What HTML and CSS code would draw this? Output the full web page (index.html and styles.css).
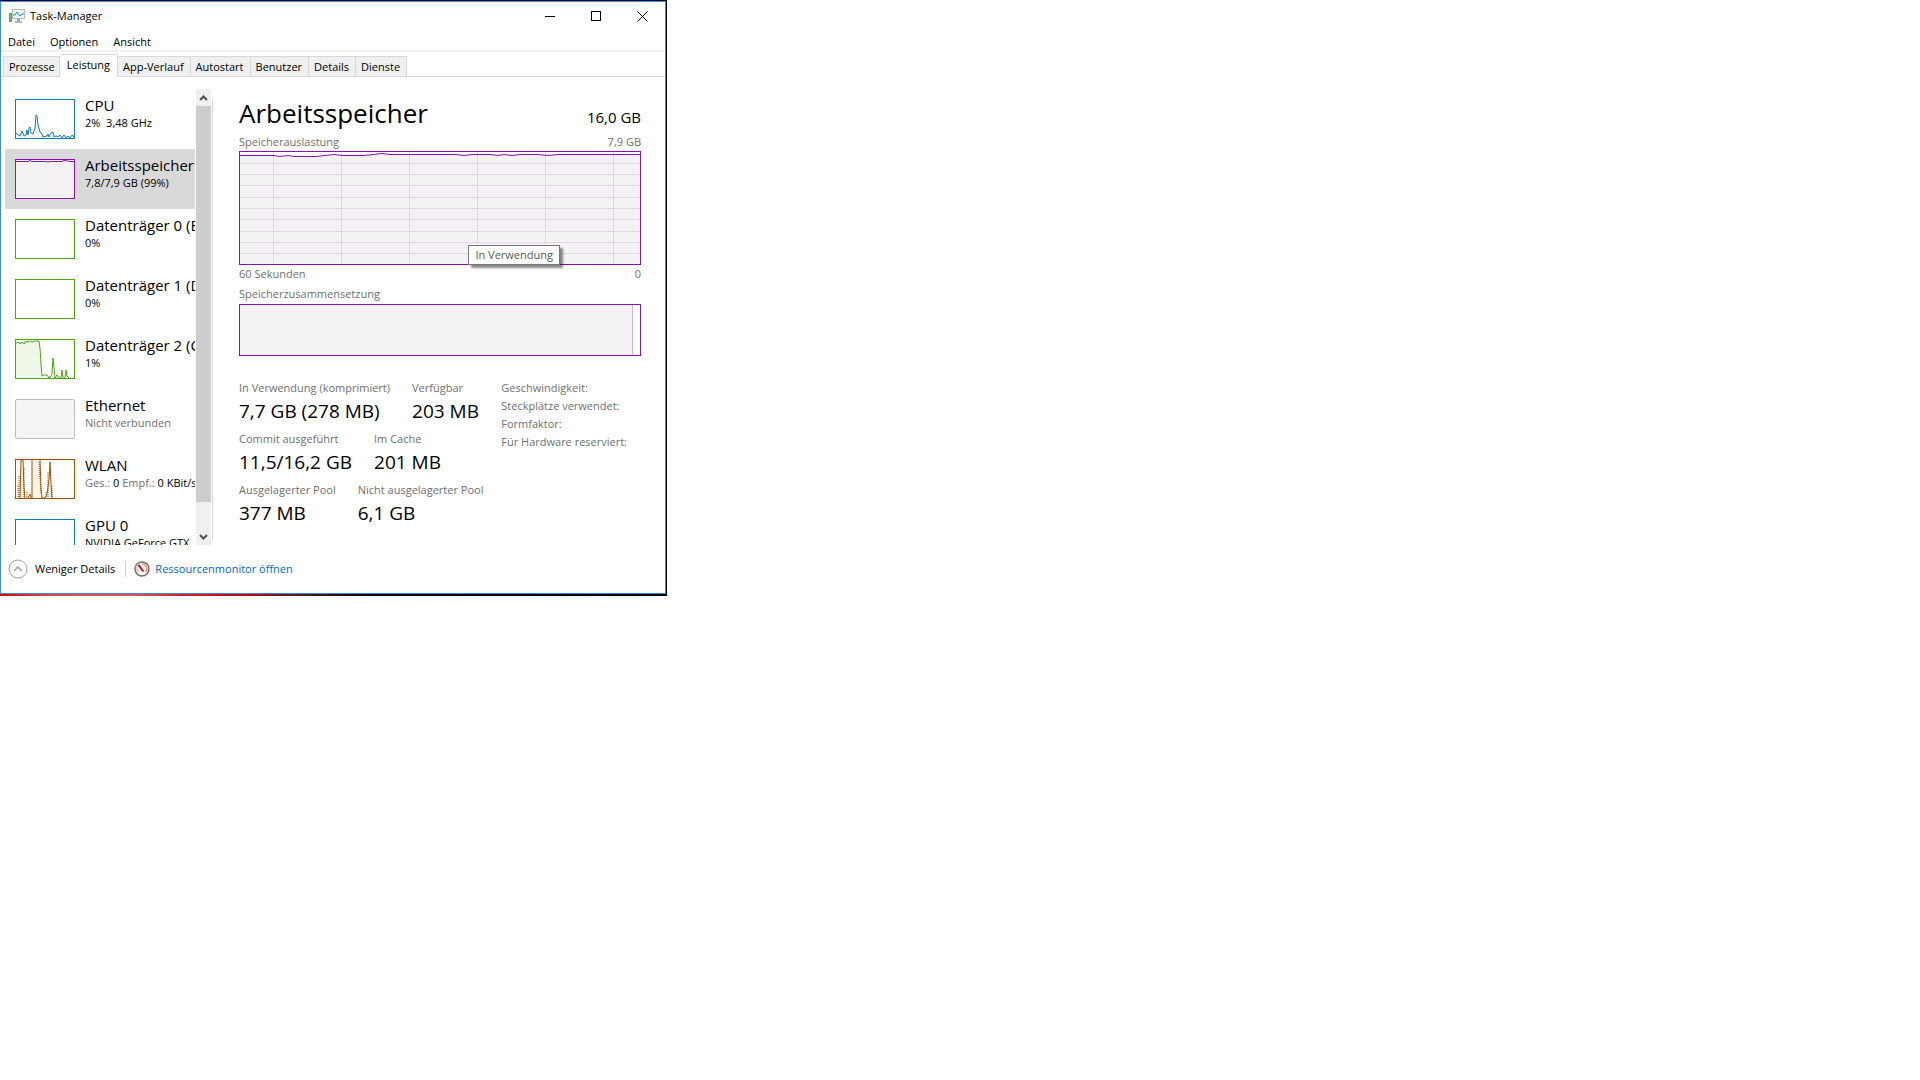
FILE: index.html
```html
<!DOCTYPE html>
<html lang="de">
<head>
  <meta charset="UTF-8">
  <title>Task-Manager</title>
  <meta name="viewport" content="width=device-width, initial-scale=1">
  <link rel="stylesheet" href="styles.css">
</head>
<body>

  <div class="desktop">
    <div class="window">

      <header class="titlebar">
        <svg class="app-icon" width="16" height="14" viewBox="0 0 16 14">
          <rect x="0" y="4" width="3" height="9" fill="#8e9194"/>
          <rect x="1" y="5" width="1" height="3" fill="#3fd23f"/>
          <rect x="3" y="0" width="13" height="10" fill="#b4b7ba"/>
          <rect x="4" y="1" width="11" height="8" fill="#e2f3fc"/>
          <path d="M4 6 L6 6 L8 3 L11 7 L13 5 L15 5" fill="none" stroke="#2f8fc7"/>
          <rect x="8" y="10" width="3" height="2" fill="#9b9ea1"/>
          <rect x="6" y="12" width="7" height="2" fill="#b4b7ba"/>
        </svg>
        <h1>Task-Manager</h1>
        <div class="window-buttons">
          <button aria-label="Minimieren"><svg width="11" height="11"><path d="M0 5.5H10"/></svg></button>
          <button aria-label="Maximieren"><svg width="11" height="11"><path d="M.5 .5H9.5V9.5H.5Z"/></svg></button>
          <button aria-label="Schließen"><svg class="smooth" width="11" height="11"><path d="M.5 .5L10.5 10.5M10.5 .5L.5 10.5"/></svg></button>
        </div>
      </header>

      <nav class="menu">
        <button>Datei</button>
        <button>Optionen</button>
        <button>Ansicht</button>
      </nav>

      <div class="tabs" role="tablist">
        <button role="tab">Prozesse</button>
        <button role="tab" class="active" aria-selected="true">Leistung</button>
        <button role="tab">App-Verlauf</button>
        <button role="tab">Autostart</button>
        <button role="tab">Benutzer</button>
        <button role="tab">Details</button>
        <button role="tab">Dienste</button>
      </div>

      <main class="content">
        <aside class="sidebar">
          <div class="devices">
            <button class="device cpu">
              <svg class="thumb" viewBox="0 0 58 38">
                <path class="area" d="M0 34L2 35L4 36L6 31L8 36L10 34L12 31L13 35L14 28L15 29L16 35L18 31L19 33L20 16L21 15L22 25L24 31L26 35L28 37L31 36L33 35L34 37L36 32L37 35L39 34L41 38L42 36L44 38L46 34L48 38L50 34L52 37L54 38L56 35L58 37V38H0Z"/>
                <path d="M0 33L2 35L4 36L6 31L8 36L10 35L11 30L12 35L13 28L14 27L15 33L17 34L18 31L19 29L20 15L21 16L22 25L24 32L26 34L27 37L31 36L32 34L33 37L35 33L37 32L38 37L40 36L42 37L44 35L46 38L48 35L50 38L52 36L54 38L56 35L58 37"/>
              </svg>
              <span class="device-text"><b>CPU</b><small>2%&nbsp; 3,48 GHz</small></span>
            </button>
            <button class="device memory selected">
              <svg class="thumb" viewBox="0 0 58 38">
                <path class="area" d="M0 1H58V38H0Z"/>
                <path d="M0 1.5H12L14 .5L16 1.5H30L32 2L34 1.5H46L48 .5L52 1L54 1.5H58"/>
              </svg>
              <span class="device-text"><b>Arbeitsspeicher</b><small>7,8/7,9 GB (99%)</small></span>
            </button>
            <button class="device disk">
              <svg class="thumb" viewBox="0 0 58 38"></svg>
              <span class="device-text"><b>Datenträger 0 (E:)</b><small>0%</small></span>
            </button>
            <button class="device disk">
              <svg class="thumb" viewBox="0 0 58 38"></svg>
              <span class="device-text"><b>Datenträger 1 (D:)</b><small>0%</small></span>
            </button>
            <button class="device disk">
              <svg class="thumb" viewBox="0 0 58 38">
                <path class="area" d="M0 3L3 2L6 4L10 1L14 2L23 1L24 8L25 24L26 38H0Z"/>
                <path d="M0 3L2 2L4 4L6 2L8 4L10 1L12 2L14 1L16 2L19 1H23L24 8L25 24L26 36L28 35H31L33 38L35 36L36 34L37 18L38 28L39 38L41 35L43 38H45L46 30L47 38H49L50 30L51 36L53 38"/>
              </svg>
              <span class="device-text"><b>Datenträger 2 (C:)</b><small>1%</small></span>
            </button>
            <button class="device ethernet">
              <svg class="thumb" viewBox="0 0 58 38"></svg>
              <span class="device-text"><b>Ethernet</b><small class="muted">Nicht verbunden</small></span>
            </button>
            <button class="device wlan">
              <svg class="thumb" viewBox="0 0 58 38">
                <path class="area" d="M2 38L5 0H7L9 38ZM16 38V0H24L26 38ZM31 38L34 2L36 38Z"/>
                <path d="M4 38L5 0H7L8 28L9 38M12 38L14 34L15 38H16V0M24 0L25 28L26 38H29L31 34L33 20L34 2L35 24L36 38"/>
                <path class="dotted" d="M2 26V38M3 16V38M8 8V38M11 32V38M23 2L25 34M30 32V38M32 12V38M36 26V38"/>
              </svg>
              <span class="device-text"><b>WLAN</b><small><span class="muted">Ges.:</span> 0 <span class="muted">Empf.:</span> 0 KBit/s</small></span>
            </button>
            <button class="device cpu">
              <svg class="thumb" viewBox="0 0 58 38"></svg>
              <span class="device-text"><b>GPU 0</b><small>NVIDIA GeForce GTX</small></span>
            </button>
          </div>
          <div class="scrollbar">
            <button aria-label="Nach oben"><svg width="9" height="6"><path d="M1 5L4.500 1.500L8 5"/></svg></button>
            <div class="scroll-thumb"></div>
            <button aria-label="Nach unten"><svg width="9" height="6"><path d="M1 1L4.500 4.500L8 1"/></svg></button>
          </div>
        </aside>

        <section class="panel">
          <div class="row heading">
            <h2>Arbeitsspeicher</h2>
            <span class="total">16,0 GB</span>
          </div>
          <div class="row caption"><span>Speicherauslastung</span><span>7,9 GB</span></div>
          <div class="usage">
            <svg class="graph" viewBox="0 0 400 112" preserveAspectRatio="none">
              <path class="area" d="M0 4H34L44 5H76L92 3L126 3L142 2H400V112H0Z"/>
              <path class="grid" d="M0 11.500H400M0 22.500H400M0 33.500H400M0 45.500H400M0 56.500H400M0 67.500H400M0 79.500H400M0 90.500H400M0 101.500H400M33.500 0V112M101.500 0V112M169.500 0V112M237.500 0V112M305.500 0V112M373.500 0V112"/>
              <path class="line" d="M0 3.500H34L40 4.500L48 3.500L54 4.500H76L94 2.500L102 3.500H124L142 1.500L150 2.500H216L224 3.500L232 2.500H250L258 3.500L264 2.500L272 3.500L280 2.500H298L308 3.500L318 2.500H400"/>
            </svg>
            <div class="tooltip" role="tooltip">In Verwendung</div>
          </div>
          <div class="row caption below"><span>60 Sekunden</span><span>0</span></div>
          <div class="row caption"><span>Speicherzusammensetzung</span></div>
          <div class="composition"><div class="in-use"></div></div>

          <div class="details">
            <div class="stats">
              <dl>
                <div><dt>In Verwendung (komprimiert)</dt><dd>7,7 GB (278 MB)</dd></div>
                <div><dt>Verfügbar</dt><dd>203 MB</dd></div>
              </dl>
              <dl>
                <div><dt>Commit ausgeführt</dt><dd>11,5/16,2 GB</dd></div>
                <div><dt>Im Cache</dt><dd>201 MB</dd></div>
              </dl>
              <dl>
                <div><dt>Ausgelagerter Pool</dt><dd>377 MB</dd></div>
                <div><dt>Nicht ausgelagerter Pool</dt><dd>6,1 GB</dd></div>
              </dl>
            </div>
            <ul class="hardware">
              <li>Geschwindigkeit:</li>
              <li>Steckplätze verwendet:</li>
              <li>Formfaktor:</li>
              <li>Für Hardware reserviert:</li>
            </ul>
          </div>
        </section>
      </main>

      <footer class="footer">
        <button class="fewer">
          <svg width="20" height="20" viewBox="0 0 20 20" fill="none" stroke="#a0a0a0">
            <circle cx="10" cy="10" r="9"/>
            <path d="M6 12L10 8L14 12" stroke-width="1.500"/>
          </svg>
          Weniger Details
        </button>
        <a class="monitor" href="#">
          <svg width="16" height="16" viewBox="0 0 16 16" fill="none">
            <circle cx="8" cy="8" r="7" fill="#f6f4ef" stroke="#77736e" stroke-width="1.500"/>
            <path d="M4 11A5 5 0 0 1 6 3.500" stroke="#b9b4ac"/>
            <path d="M8 3A5 5 0 0 1 12 11" stroke="#e89a6a" stroke-width="1.500"/>
            <path d="M4.500 4L9.500 10.500" stroke="#c8101c" stroke-width="2"/>
          </svg>
          Ressourcenmonitor öffnen
        </a>
      </footer>

    </div>
  </div>

</body>
</html>
```
FILE: styles.css
```css
* {
  box-sizing: border-box;
}
body {
  margin: 0;
  background: #fff;
  color: #000;
  font-family: "Open Sans", "Noto Sans", sans-serif;
  font-size: 11px;
  line-height: 16px;
}
button {
  font: inherit;
  color: inherit;
  background: none;
  border: 0;
  padding: 0;
}
h1, h2, dl, dd, ul {
  margin: 0;
  padding: 0;
}
svg {
  display: block;
  flex: none;
}

/* strip of desktop around the window */
.desktop {
  max-width: 667px;
  padding: 1px 1px 2px 0;
  background: linear-gradient(90deg, #d01010 0, #c85050 8%, #d05a5a 20%, #c82020 28%, #b01010 37%, #4a2028 44%, #0a0508 55%, #000 100%);
  box-shadow: inset 0 1px #000;
}
.window {
  background: #fff;
  border: 1px solid #3a8de0;
}

.titlebar {
  display: flex;
  align-items: center;
  height: 30px;
  padding: 0 0 2px 8px;
}
.titlebar h1 {
  margin-left: 5px;
  font-size: 11px;
  font-weight: 400;
}
.window-buttons {
  display: flex;
  margin-left: auto;
}
.window-buttons button {
  display: flex;
  align-items: center;
  justify-content: center;
  width: 46px;
  height: 28px;
}
.window-buttons svg {
  fill: none;
  stroke: #000;
  shape-rendering: crispEdges;
}
.window-buttons .smooth {
  shape-rendering: auto;
}

.menu {
  display: flex;
  gap: 15px;
  height: 20px;
  padding: 2px 0 0 7px;
  border-bottom: 2px solid #f0f0f0;
}

.tabs {
  display: flex;
  align-items: flex-end;
  padding: 2px 0 0 2px;
  height: 25px;
  border-bottom: 1px solid #d9d9d9;
}
.tabs button {
  height: 20px;
  padding: 0 6px 0 5px;
  background: #f0f0f0;
  border: 1px solid #d9d9d9;
  border-width: 1px 1px 0 0;
}
.tabs button:first-child {
  padding-right: 4px;
  border-left-width: 1px;
}
.tabs .active {
  height: 23px;
  margin-bottom: -1px;
  padding: 0 7px 3px;
  background: #fff;
}

.content {
  display: flex;
  padding: 12px 24px 0 4px;
}
.sidebar {
  display: flex;
  flex: none;
  width: 208px;
  height: 456px;
}
.devices {
  width: 190px;
  overflow: hidden;
}
.device {
  display: flex;
  gap: 10px;
  width: 100%;
  height: 60px;
  padding: 10px 0 0 10px;
  overflow: hidden;
  text-align: left;
  white-space: nowrap;
}
.device.selected {
  background: #d9d9d9;
}
.device-text {
  display: flex;
  flex-direction: column;
  margin-top: -3px;
}
.device b {
  font-size: 15px;
  font-weight: 400;
  line-height: 18px;
}
.device small {
  font-size: 11px;
  line-height: 18px;
}
.muted {
  color: #707070;
}

.thumb {
  width: 60px;
  height: 40px;
  border: 1px solid;
  background: #fff;
  fill: none;
  stroke: currentColor;
}
.thumb .area {
  stroke: none;
}
.thumb .dotted {
  stroke-dasharray: 1 1;
}
.cpu .thumb { color: #117dbb; }
.cpu .area { fill: #f1f6fa; }
.memory .thumb { color: #8b12ae; }
.memory .area { fill: #f4f2f4; }
.disk .thumb { color: #4da60c; }
.disk .area { fill: #eff7e9; }
.wlan .thumb { color: #a74f01; }
.wlan .area { fill: #fcf3eb; }
.ethernet .thumb {
  color: #bcbcbc;
  background: #f5f5f5;
  border-radius: 2px;
}

.scrollbar {
  display: flex;
  flex-direction: column;
  width: 18px;
  padding-left: 1px;
  background: linear-gradient(#d9d9d9, #d9d9d9) right 10px / 1px 441px no-repeat;
}
.scrollbar button {
  display: flex;
  align-items: center;
  justify-content: center;
  width: 15px;
  height: 17px;
  background: #f0f0f0;
}
.scrollbar button:last-child {
  flex: 1;
  align-items: flex-end;
  padding-bottom: 5px;
}
.scrollbar svg {
  fill: none;
  stroke: #505050;
  stroke-width: 2;
}
.scroll-thumb {
  width: 15px;
  height: 396px;
  background: #cdcdcd;
}

.panel {
  flex: 1;
  padding: 4px 0 0 26px;
}
.row {
  display: flex;
  justify-content: space-between;
}
.heading {
  align-items: baseline;
  height: 40px;
}
.heading h2 {
  font-size: 26px;
  font-weight: 400;
  line-height: 40px;
}
.total {
  font-size: 15px;
}
.caption {
  color: #707070;
  height: 18px;
  line-height: 18px;
}
.usage {
  position: relative;
}
.graph {
  width: 100%;
  height: 114px;
  border: 1px solid #8b12ae;
  fill: none;
}
.graph .area {
  fill: #f4f2f4;
}
.graph .grid {
  stroke: #e3d4e6;
}
.graph .line {
  stroke: #8b12ae;
}
.tooltip {
  position: absolute;
  right: 81px;
  bottom: 0;
  padding: 1px 6px;
  background: #fff;
  border: 1px solid #767676;
  box-shadow: 3px 3px 2px rgba(0, 0, 0, 0.45);
  color: #575757;
  white-space: nowrap;
}
.below {
  height: 20px;
}
.composition {
  height: 52px;
  margin-top: 1px;
  padding-right: 7px;
  border: 1px solid #8b12ae;
}
.in-use {
  height: 100%;
  background: #f4f2f4;
  border-right: 1px solid #d0b0dc;
}

.details {
  display: flex;
  justify-content: space-between;
  padding: 23px 14px 0 0;
  color: #707070;
}
.stats dl {
  display: flex;
  gap: 22px;
  height: 51px;
}
.stats dt {
  line-height: 18px;
}
.stats dd {
  color: #000;
  font-size: 19px;
  line-height: 28px;
}
.hardware {
  list-style: none;
  line-height: 18px;
}

.footer {
  display: flex;
  align-items: center;
  height: 48px;
  padding-left: 7px;
}
.fewer {
  display: flex;
  align-items: center;
  gap: 7px;
  padding-right: 10px;
}
.monitor {
  display: flex;
  align-items: center;
  gap: 5px;
  padding-left: 8px;
  border-left: 1px solid #d0d0d0;
  color: #0066cc;
  text-decoration: none;
}
```
